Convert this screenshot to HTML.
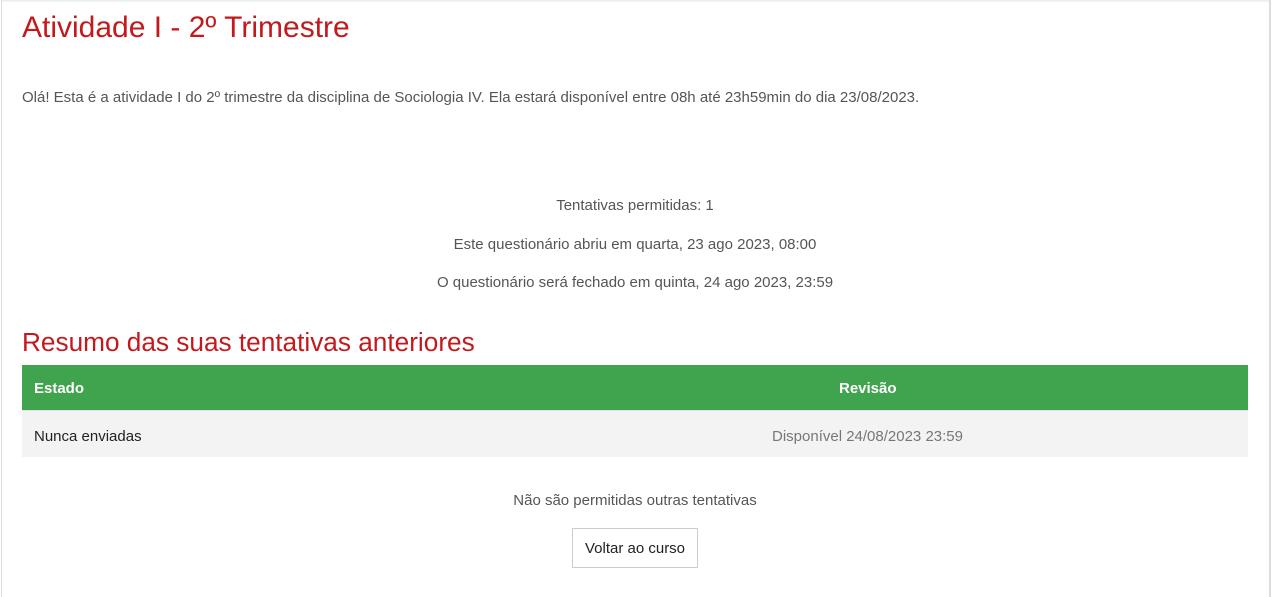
<!DOCTYPE html>
<html><head><meta charset="utf-8"><style>
html,body{margin:0;padding:0;background:#fff;}
body{width:1276px;height:597px;overflow:hidden;position:relative;font-family:"Liberation Sans",Arial,sans-serif;color:#555;font-size:15px;}
.panel{position:absolute;left:1px;top:0;width:1267px;height:597px;border-left:1px solid #ddd;border-right:2px solid #ddd;box-shadow:inset 0 2px 2px -1px #e4e4e4;}
.a{position:absolute;white-space:nowrap;}
h1{position:absolute;left:22px;top:11px;margin:0;font-weight:normal;font-size:30px;color:#c4191c;white-space:nowrap;}
h2{position:absolute;left:22px;top:327px;margin:0;font-weight:normal;font-size:26.2px;color:#c4191c;white-space:nowrap;}
.c{left:0;width:1270px;text-align:center;}
.th{position:absolute;left:22px;top:365px;width:1226px;height:45px;background:#40a34d;color:#fff;font-weight:bold;}
.tr{position:absolute;left:22px;top:410px;width:1226px;height:47px;background:#f3f3f3;border-top:1px solid #e2e2e2;box-sizing:border-box;}
.btn{position:absolute;left:572px;top:528px;width:124px;height:38px;border:1px solid #ccc;color:#222;text-align:center;line-height:39px;}
</style></head><body>
<div class="panel"></div>
<h1>Atividade I - 2º Trimestre</h1>
<div class="a" style="left:22px;top:89px;">Olá! Esta é a atividade I do 2º trimestre da disciplina de Sociologia IV. Ela estará disponível entre 08h até 23h59min do dia 23/08/2023.</div>
<div class="a c" style="top:197px;">Tentativas permitidas: 1</div>
<div class="a c" style="top:236px;">Este questionário abriu em quarta, 23 ago 2023, 08:00</div>
<div class="a c" style="top:274px;">O questionário será fechado em quinta, 24 ago 2023, 23:59</div>
<h2>Resumo das suas tentativas anteriores</h2>
<div class="th"><span class="a" style="left:12px;top:15px;">Estado</span><span class="a" style="left:817px;top:15px;">Revisão</span></div>
<div class="tr"><span class="a" style="left:12px;top:17px;color:#222;">Nunca enviadas</span><span class="a" style="left:750px;top:17px;color:#777;">Disponível 24/08/2023 23:59</span></div>
<div class="a c" style="top:492px;">Não são permitidas outras tentativas</div>
<div class="btn">Voltar ao curso</div>
</body></html>
